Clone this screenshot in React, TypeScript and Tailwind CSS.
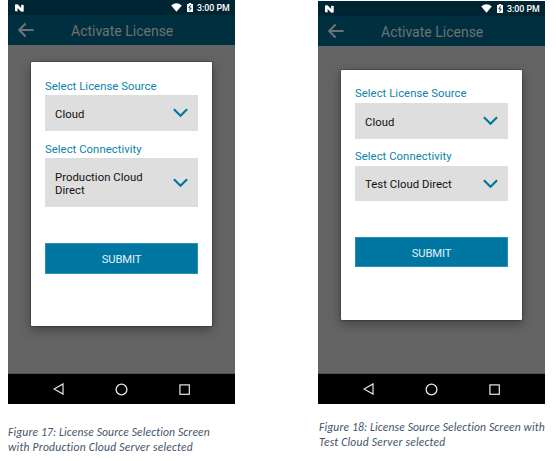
type PhoneProps = {
  connectivity: string[];
  first?: boolean;
};

function StatusBar() {
  return (
    <div className="flex h-[15px] items-center bg-[#002532] pl-[7px] pr-[5px] text-white">
      <svg width="9" height="8" viewBox="0 0 9 8" fill="currentColor">
        <path d="M0 .6 2.6.2 6.2 4V.7L8.7 1v6.4l-2.5.3L2.6 4v3.5L0 7.1Z" />
      </svg>
      <svg className="ml-auto" width="11" height="9" viewBox="0 0 11 9" fill="currentColor">
        <path d="M.2 2.4Q5.5-1.8 10.8 2.4L5.5 8.8Z" />
      </svg>
      <svg className="ml-[5px]" width="6" height="9" viewBox="0 0 6 9">
        <path fill="currentColor" d="M0 1h1.8V0h2.4v1H6v8H0Z" />
        <path d="M3.6 2 1.8 5h2.4L2.5 7.8" fill="none" stroke="#002532" strokeWidth=".9" />
      </svg>
      <span className="ml-1 w-[33px] whitespace-nowrap pt-px text-[8.8px] font-medium leading-[15px]">3:00 PM</span>
    </div>
  );
}

function AppBar() {
  return (
    <div className="flex h-[30px] items-center bg-[#003040] pl-[10px] text-[#6d7274]">
      <svg width="16" height="16" viewBox="0 0 16 16" fill="none" stroke="currentColor" strokeWidth="2">
        <path d="M7.6 1.5 1.2 8l6.4 6.5M1.2 8H15.6" />
      </svg>
      <span className="ml-[37px] whitespace-nowrap pt-[2px] text-[14px] leading-[28px]">Activate License</span>
    </div>
  );
}

function SelectBox({ lines, height }: { lines: string[]; height: string }) {
  return (
    <div className={`flex items-center justify-between bg-[#dedede] pl-[10px] pr-[10px] ${height}`}>
      <div className="pt-[2px] text-[11.3px] leading-[13px] tracking-[0.05px] text-[#111]">
        {lines.map((line) => (
          <div key={line} className="whitespace-nowrap">{line}</div>
        ))}
      </div>
      <svg width="15" height="10" viewBox="0 0 15 10" fill="none" stroke="#0077a3" strokeWidth="2.2">
        <path d="m.9 1.2 6.6 6.5 6.6-6.5" />
      </svg>
    </div>
  );
}

function Label({ children }: { children: string }) {
  return (
    <div className="whitespace-nowrap text-[11.3px] leading-[14px] tracking-[0.05px] text-[#0d82aa]">{children}</div>
  );
}

function NavBar() {
  return (
    <div className="flex h-[30px] items-center justify-between bg-black pl-[45px] pr-[45px]">
      <svg width="11" height="12" viewBox="0 0 11 12" fill="none" stroke="#e8e8e8" strokeWidth="1.2">
        <path d="M10 .9v10.2L1 6Z" />
      </svg>
      <svg width="13" height="13" viewBox="0 0 13 13" fill="none" stroke="#e8e8e8" strokeWidth="1.3">
        <circle cx="6.5" cy="6.5" r="5.4" />
      </svg>
      <svg width="11" height="11" viewBox="0 0 11 11" fill="none" stroke="#e8e8e8" strokeWidth="1.2">
        <rect x=".9" y=".9" width="9.4" height="9.4" />
      </svg>
    </div>
  );
}

function Phone({ connectivity, first = false }: PhoneProps) {
  return (
    <div className={`flex w-[227px] flex-col bg-[#646464] font-[Roboto,sans-serif] ${first ? "h-[404px]" : "mt-px h-[403px]"}`}>
      <StatusBar />
      <AppBar />
      <div className={`flex flex-1 flex-col items-start border-b border-[#505050] pl-[23px] ${first ? "pt-[17px]" : "pt-[24px]"}`}>
        <div
          className={`w-[181px] rounded-[1px] bg-white pl-[14px] pr-[14px] shadow-[0_4px_12px_rgba(0,0,0,0.35),0_0_2px_rgba(0,0,0,0.6)] ${first ? "h-[264px] pt-[18px]" : "h-[250px] pt-[17px]"}`}
        >
          <Label>Select License Source</Label>
          <div className={first ? "pt-px" : "pt-[2px]"}>
            <SelectBox lines={["Cloud"]} height="h-[36px]" />
          </div>
          <div className={first ? "pt-[12px]" : "pt-[11px]"}>
            <Label>Select Connectivity</Label>
          </div>
          <div className={first ? "pt-px" : "pt-[2px]"}>
            <SelectBox lines={connectivity} height={first ? "h-[49px]" : "h-[35px]"} />
          </div>
          <button
            className={`mt-[36px] block w-full border border-[#2c8eb1] bg-[#0077a3] pt-[2px] text-center text-[11.2px] leading-[28px] tracking-[-0.1px] text-[#e2f1f6] ${first ? "h-[31px]" : "h-[30px]"}`}
          >
            SUBMIT
          </button>
        </div>
      </div>
      <NavBar />
    </div>
  );
}

function Caption({ lines, offset }: { lines: string[]; offset: string }) {
  return (
    <figcaption className={`font-[Carlito,Lato,sans-serif] text-[11.6px] italic leading-[15px] tracking-[0.14px] text-[#44546a] ${offset}`}>
      <div className="whitespace-nowrap">{lines[0]}</div>
      <div className="whitespace-nowrap tracking-[0.22px]">{lines[1]}</div>
    </figcaption>
  );
}

export default function App() {
  return (
    <main className="flex h-[461px] w-[556px] gap-[83px] overflow-hidden bg-white pl-2">
      <figure className="w-[227px]">
        <Phone first connectivity={["Production Cloud", "Direct"]} />
        <Caption
          offset="pt-[21px]"
          lines={["Figure 17: License Source Selection Screen", "with Production Cloud Server selected"]}
        />
      </figure>
      <figure className="w-[227px]">
        <Phone connectivity={["Test Cloud Direct"]} />
        <Caption
          offset="pl-px pt-[16px]"
          lines={["Figure 18: License Source Selection Screen with", "Test Cloud Server selected"]}
        />
      </figure>
    </main>
  );
}
